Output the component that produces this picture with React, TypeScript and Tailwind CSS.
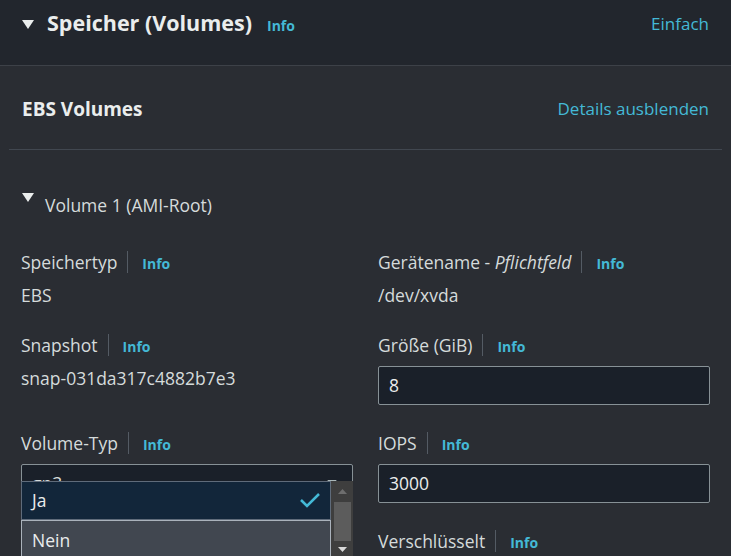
import type { ReactNode } from "react";

function Caret({ className }: { className?: string }) {
	return (
		<svg
			viewBox="0 0 12 9"
			className={className}
			fill="currentColor"
			aria-hidden
		>
			<path d="M0 0 H12 L6 9 Z" />
		</svg>
	);
}

function InfoLink() {
	return (
		<span className="text-[14px] font-bold leading-[24px] text-[#44b9d6]">
			Info
		</span>
	);
}

function FieldLabel({ children }: { children: ReactNode }) {
	return (
		<div className="flex h-[24px] items-center">
			<span className="leading-[24px]">{children}</span>
			<span className="ml-[10px] h-[22px] w-px bg-[#545b64]" />
			<span className="ml-[14px]">
				<InfoLink />
			</span>
		</div>
	);
}

function TextInput({ value }: { value: string }) {
	return (
		<div className="mt-[9px] flex h-[39px] items-center rounded-[2px] border border-[#879196] bg-[#1a2029] px-[10px] text-[#eaeded]">
			{value}
		</div>
	);
}

function OpenSelect() {
	return (
		<div className="relative mt-[9px]">
			<div className="flex h-[39px] items-center justify-between rounded-[2px] border border-[#879196] bg-[#1a2029] pl-[10px] pr-[14px]">
				<span>gp3</span>
				<Caret className="h-[7px] w-[12px] text-[#aab7b8]" />
			</div>

			<div className="absolute left-0 top-[17px] z-10 flex h-[78px] w-full">
				<ul className="flex w-[310px] flex-col text-[#eaeded]">
					<li className="flex h-[39px] items-center justify-between border border-[#5f6b7a] bg-[#12263a] pl-[10px] pr-[10px]">
						<span>Ja</span>
						<svg
							viewBox="0 0 20 15"
							className="h-[15px] w-[20px] text-[#44b9d6]"
							fill="none"
							stroke="currentColor"
							strokeWidth={2.5}
							aria-hidden
						>
							<path d="M1 7 L7 13 L19 1" />
						</svg>
					</li>
					<li className="flex h-[39px] items-center border-x border-t border-[#aab2bb] bg-[#414750] pl-[10px]">
						Nein
					</li>
				</ul>
				<div className="flex w-[22px] flex-col bg-[#3e3e3e]">
					<div className="flex h-[20px] items-center justify-center">
						<svg viewBox="0 0 9 5" className="h-[5px] w-[9px]" aria-hidden>
							<path d="M0 5 L4.5 0 L9 5 Z" fill="#6e6e6e" />
						</svg>
					</div>
					<div className="ml-[3px] mr-[2px] mt-px h-[39px] bg-[#5c5c5c]" />
					<div className="flex h-[17px] items-center justify-center">
						<svg viewBox="0 0 9 5" className="h-[5px] w-[9px]" aria-hidden>
							<path d="M0 0 H9 L4.5 5 Z" fill="#d9d9d9" />
						</svg>
					</div>
				</div>
			</div>
		</div>
	);
}

export default function App() {
	return (
		<div className="h-[556px] w-[731px] overflow-hidden bg-[#2a2d33] font-['Open_Sans',sans-serif] text-[17.5px] text-[#d5dbdb]">
			<header className="box-border flex h-[66px] items-start justify-between border-b border-[#3d4148] bg-[#22262d] px-[22px] pt-[10px]">
				<div className="mt-px flex h-[26px] items-center">
					<Caret className="h-[9px] w-[12px] text-[#eaeded]" />
					<div className="ml-[13px] flex items-baseline">
						<h2 className="text-[21.5px] font-bold leading-[26px] text-[#eaeded]">
							Speicher (Volumes)
						</h2>
						<span className="ml-[15px]">
							<InfoLink />
						</span>
					</div>
				</div>
				<span className="pt-[1px] text-[17px] leading-[26px] text-[#44b9d6]">
					Einfach
				</span>
			</header>

			<div className="px-[9px]">
				<div className="flex items-center justify-between border-b border-[#414750] px-[13px] pb-[28px] pt-[31px]">
					<h3 className="text-[19px] font-bold leading-[24px] text-[#eaeded]">
						EBS Volumes
					</h3>
					<span className="text-[17px] leading-[24px] text-[#44b9d6]">
						Details ausblenden
					</span>
				</div>
			</div>

			<div className="px-[21px]">
				<div className="mt-[43px] flex items-start">
					<Caret className="ml-px h-[9px] w-[12px] text-[#eaeded]" />
					<span className="ml-[11px] leading-[24px]">Volume 1 (AMI-Root)</span>
				</div>

				<div className="mt-[33px] grid grid-cols-2 gap-x-[25px] gap-y-[26px]">
					<div>
						<FieldLabel>Speichertyp</FieldLabel>
						<div className="mt-[9px] leading-[24px]">EBS</div>
					</div>
					<div>
						<FieldLabel>
							Gerätename - <em>Pflichtfeld</em>
						</FieldLabel>
						<div className="mt-[9px] leading-[24px]">/dev/xvda</div>
					</div>

					<div>
						<FieldLabel>Snapshot</FieldLabel>
						<div className="mt-[9px] leading-[24px]">snap-031da317c4882b7e3</div>
					</div>
					<div>
						<FieldLabel>Größe (GiB)</FieldLabel>
						<TextInput value="8" />
					</div>

					<div>
						<FieldLabel>Volume-Typ</FieldLabel>
						<OpenSelect />
					</div>
					<div>
						<FieldLabel>IOPS</FieldLabel>
						<TextInput value="3000" />
					</div>

					<div />
					<div>
						<FieldLabel>Verschlüsselt</FieldLabel>
					</div>
				</div>
			</div>
		</div>
	);
}
